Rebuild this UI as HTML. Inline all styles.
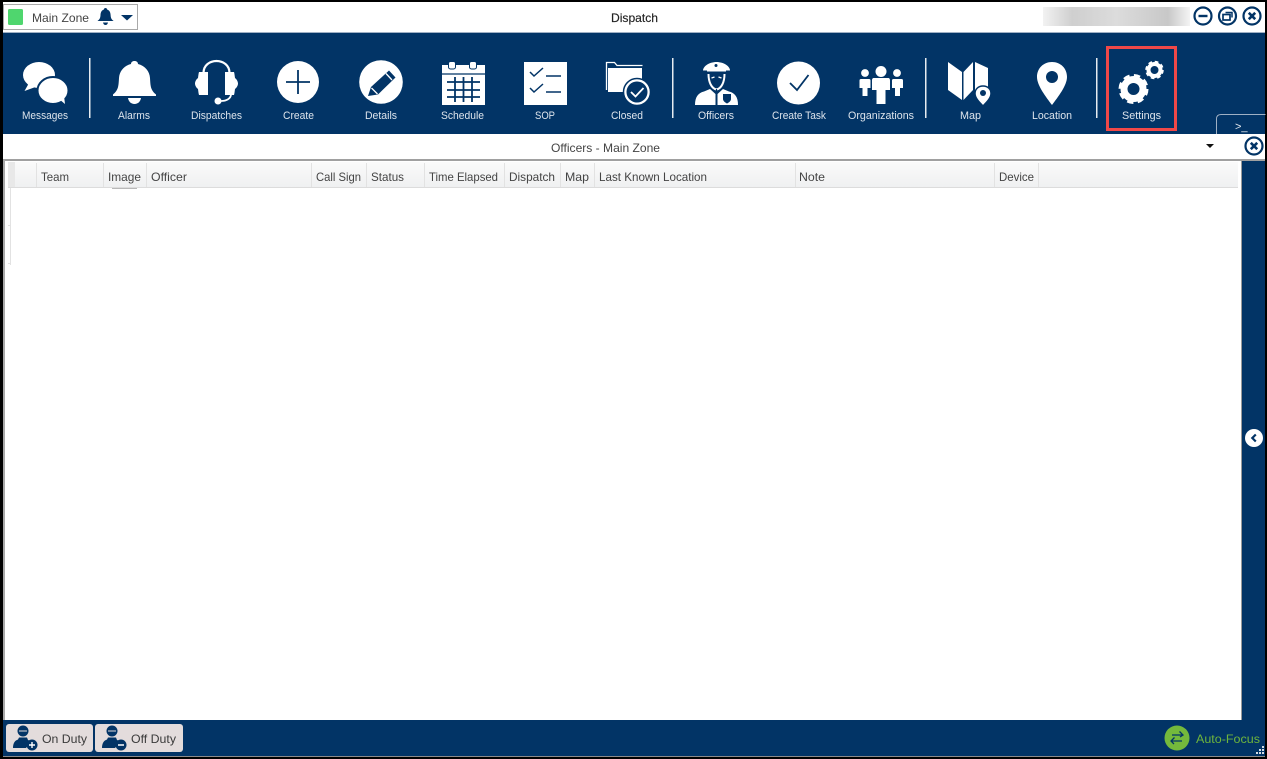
<!DOCTYPE html>
<html lang="en"><head><meta charset="utf-8"><title>Dispatch</title>
<style>
html,body{margin:0;padding:0;background:#000;width:1267px;height:759px;overflow:hidden}
svg{display:block;font-family:"Liberation Sans",sans-serif;filter:blur(.3px)}
.t{fill:#dde4ec;font-size:11px}
.h{fill:#444;font-size:12px}
</style></head><body>
<svg width="1267" height="759" viewBox="0 0 1267 759" xmlns="http://www.w3.org/2000/svg">
<defs>
<linearGradient id="hd" x1="0" y1="0" x2="0" y2="1"><stop offset="0" stop-color="#fafafa"/><stop offset="1" stop-color="#eff0f1"/></linearGradient>
<linearGradient id="bl" x1="0" y1="0" x2="1" y2="0"><stop offset="0" stop-color="#f2f2f2"/><stop offset=".2" stop-color="#cfcfcf"/><stop offset=".5" stop-color="#dcdcdc"/><stop offset=".85" stop-color="#c8c8c8"/><stop offset="1" stop-color="#f4f4f4"/></linearGradient>
</defs>
<rect width="1267" height="759" fill="#000"/>
<rect x="3" y="2" width="1262" height="755" fill="#fff"/>
<!-- title bar -->
<rect x="3.500" y="4.500" width="134" height="25" fill="#fff" stroke="#a9a9a9"/>
<rect x="8" y="9" width="15" height="16" rx="1.500" fill="#4fd66e"/>
<text x="32" y="22" font-size="12" fill="#444" textLength="57" lengthAdjust="spacingAndGlyphs">Main Zone</text>
<path d="M105.500 8c1 0 1.600.7 1.600 1.500 2.500.8 3.400 3 3.500 5.500.1 3 1 4.500 3 6H97.500c2-1.500 2.900-3 3-6 .1-2.500 1-4.700 3.400-5.500 0-.8.600-1.500 1.600-1.500z" fill="#023466"/>
<path d="M103 22.500h5c-.3 1.500-1.200 2.500-2.500 2.500s-2.200-1-2.500-2.500z" fill="#023466"/>
<path d="M121 15h12l-6 5.500z" fill="#023466"/>
<text x="634.500" y="22" font-size="12" fill="#222" text-anchor="middle" textLength="47" lengthAdjust="spacingAndGlyphs" stroke="#222" stroke-width=".15">Dispatch</text>
<rect x="1043" y="7" width="147" height="19" fill="url(#bl)"/>
<g fill="none" stroke="#023466" stroke-width="2.200">
<circle cx="1203" cy="16" r="8.500"/><circle cx="1227.500" cy="16" r="8.500"/><circle cx="1252" cy="16" r="8.500"/>
<path d="M1198.500 16h9" stroke-width="2.400"/>
<rect x="1223" y="14.500" width="7" height="5.500" stroke-width="1.700"/><path d="M1225.500 12.500h6.500v5" stroke-width="1.500"/>
<path d="M1248.800 12.800l6.400 6.400M1255.200 12.800l-6.400 6.400" stroke-width="2.600"/>
</g>
<!-- toolbar -->
<rect x="3" y="32" width="1262" height="1" fill="#9fb0c4"/>
<rect x="3" y="33" width="1262" height="101" fill="#023466"/>
<g fill="#e6ebf0"><rect x="89" y="58" width="1.500" height="60"/><rect x="672" y="58" width="1.500" height="60"/><rect x="925" y="58" width="1.500" height="60"/><rect x="1096" y="58" width="1.500" height="60"/></g>
<g fill="#fff">
<!-- messages -->
<ellipse cx="39" cy="75" rx="16" ry="13"/><path d="M29 83l-4.500 8 11-4z"/>
<ellipse cx="53" cy="90.500" rx="15.500" ry="13.500" stroke="#023466" stroke-width="2"/><path d="M59 99l6 5-1-8z"/>
<!-- alarms -->
<path d="M134.500 61c2.200 0 3.500 1.300 3.500 3 7.500 2 11.500 7.500 12 14 .5 8 .5 12 6 16.500v1.500h-43v-1.500c5.500-4.500 5.500-8.500 6-16.500.5-6.500 4.500-12 12-14 0-1.700 1.300-3 3.500-3z"/>
<path d="M128 98h13c-.5 3.500-3 6-6.500 6s-6-2.500-6.500-6z"/>
<!-- dispatches -->
<path d="M203.500 73c0-16 26-16 26 0" fill="none" stroke="#fff" stroke-width="2.200"/>
<path d="M199 72h9v23h-9c-.5-1.500-.7-4-1-6-1.500-1-3-3.500-3-5.500s1.500-4.500 3-5.500c.3-2 .5-4.500 1-6z"/>
<path d="M234 72h-9v23h9c.5-1.500.7-4 1-6 1.500-1 3-3.500 3-5.500s-1.500-4.500-3-5.500c-.3-2-.5-4.500-1-6z"/>
<path d="M231 94c0 5-5 7-10 7" fill="none" stroke="#fff" stroke-width="1.800"/><circle cx="218" cy="101" r="3.500"/>
<!-- create -->
<circle cx="298" cy="82" r="21"/>
<!-- details -->
<circle cx="381" cy="82" r="21.800"/>
<!-- schedule -->
<rect x="442" y="65" width="43" height="40"/>
<rect x="448.500" y="61.500" width="7" height="7.500" rx="2" stroke="#023466" stroke-width="1"/><rect x="469.500" y="61.500" width="7" height="7.500" rx="2" stroke="#023466" stroke-width="1"/>
<!-- sop -->
<rect x="524" y="62" width="43" height="43"/>
<!-- closed -->
<path d="M608 68h34v24h-34z"/>
<path d="M606.500 90V62.500h8l2.500 3h25.500" fill="none" stroke="#fff" stroke-width="1.300"/>
<circle cx="637" cy="92" r="13.500" stroke="#023466" stroke-width="1.500"/>
<!-- officer -->
<path d="M703 70.500c0-4 6-8.500 13.500-8.500S730 66.500 730 70.500z"/><path d="M707 67h19v4.500h-19z"/>
<path d="M708.500 74c0 8 3 14.500 8 15.500 5-1 8-7.500 8-15.500" fill="none" stroke="#fff" stroke-width="2"/>
<path d="M695 105c0-8 3-12 9-13.500l6-2.500 5.500 5v11z"/><path d="M738 105c0-8-3-12-9-13.500l-6-2.500-5.500 5v11z"/>
<!-- create task -->
<circle cx="798.500" cy="83" r="21.500"/>
<!-- organizations -->
<circle cx="881" cy="71.500" r="5.500"/><path d="M874 78h14c1.500 0 2 1 2 2.500V90h-4.500v14h-9V90H872v-9.500c0-1.500.5-2.500 2-2.500z"/>
<circle cx="865" cy="73" r="3.900"/><path d="M861 79h8c1 0 1.500.5 1.500 1.500V88h-3v8h-5v-8h-3v-7.500c0-1 .5-1.500 1.500-1.500z"/>
<circle cx="897" cy="73" r="3.900"/><path d="M893.500 79h8c1 0 1.500.5 1.500 1.500V88h-3v8h-5v-8h-3v-7.500c0-1 .5-1.500 1.500-1.500z"/>
<!-- map -->
<path d="M948 62l14 10v28l-14-10z"/><path d="M963.500 72l9.500-10v28l-9.500 10z"/><path d="M975 62l13 6v22l-13 0z"/>
<path d="M983 86c5 0 8 3.500 8 7.500 0 4.500-4.500 9-8 12.500-3.500-3.500-8-8-8-12.500 0-4 3-7.500 8-7.500z" stroke="#023466" stroke-width="1.500"/>
<!-- location -->
<path d="M1052 62c8.500 0 15 6.300 15 15 0 8.500-9 20-15 28-6-8-15-19.500-15-28 0-8.700 6.500-15 15-15z"/>
<!-- settings -->
<circle cx="1133.500" cy="89" r="9.500" fill="none" stroke="#fff" stroke-width="7"/>
<circle cx="1133.500" cy="89" r="13" fill="none" stroke="#fff" stroke-width="4" stroke-dasharray="6 4.210"/>
<circle cx="1154.500" cy="70" r="6" fill="none" stroke="#fff" stroke-width="4"/>
<circle cx="1154.500" cy="70" r="8" fill="none" stroke="#fff" stroke-width="2.500" stroke-dasharray="3.600 2.680"/>
</g>
<!-- inner icon strokes -->
<g fill="none" stroke="#023466">
<path d="M298 70v24M286 82h24" stroke-width="1.800"/>
<path d="M368 96l3-9 18-16.500 6.500 7L378 94.500z" fill="#023466" stroke="none"/>
<path d="M371.500 88l6 6M386 73.500l6 6.500" stroke="#fff" stroke-width="1.300"/>
<g stroke-width="1.800"><path d="M447 82h33M447 90h33M447 97h33M455 77v25M463.500 77v25M472 77v25"/></g>
<path d="M442 74h43" stroke-width="1.300"/>
<g stroke-width="1.500"><path d="M530 72l4 4 9-8M546 76h15M530 88l4 4 9-8M546 92h15"/></g>
<circle cx="637" cy="92" r="10.500" fill="#023466" stroke="none"/>
<path d="M631 92l4.500 4.500 8-8.500" stroke="#fff" stroke-width="1.800"/>
<path d="M790 83l7 7 11.500-15" stroke-width="1.800"/>
<path d="M716.500 89v16" stroke-width="1.200"/>
<path d="M723 94h8v5c0 2-2 3.500-4 4.500-2-1-4-2.500-4-4.500z" fill="#023466" stroke="none"/>
</g>
<path d="M711.500 78l3-1M718.500 77l3 1" fill="none" stroke="#fff" stroke-width="1.200"/>
<circle cx="716" cy="65.500" r="1.500" fill="#023466"/>
<circle cx="1052" cy="77" r="6" fill="#023466"/>
<circle cx="983" cy="93" r="3" fill="#023466"/>
<!-- toolbar labels -->
<g class="t" text-anchor="middle" style="font-size:11px">
<text x="45" y="119" textLength="46" lengthAdjust="spacingAndGlyphs">Messages</text>
<text x="134" y="119" textLength="32" lengthAdjust="spacingAndGlyphs">Alarms</text>
<text x="216.500" y="119" textLength="51" lengthAdjust="spacingAndGlyphs">Dispatches</text>
<text x="298.500" y="119" textLength="31" lengthAdjust="spacingAndGlyphs">Create</text>
<text x="381" y="119" textLength="32" lengthAdjust="spacingAndGlyphs">Details</text>
<text x="462.500" y="119" textLength="43" lengthAdjust="spacingAndGlyphs">Schedule</text>
<text x="545" y="119" textLength="20" lengthAdjust="spacingAndGlyphs">SOP</text>
<text x="627" y="119" textLength="32" lengthAdjust="spacingAndGlyphs">Closed</text>
<text x="716" y="119" textLength="36" lengthAdjust="spacingAndGlyphs">Officers</text>
<text x="799" y="119" textLength="54" lengthAdjust="spacingAndGlyphs">Create Task</text>
<text x="881" y="119" textLength="66" lengthAdjust="spacingAndGlyphs">Organizations</text>
<text x="970.500" y="119" textLength="21" lengthAdjust="spacingAndGlyphs">Map</text>
<text x="1052" y="119" textLength="40" lengthAdjust="spacingAndGlyphs">Location</text>
<text x="1141.500" y="119" textLength="39" lengthAdjust="spacingAndGlyphs">Settings</text>
</g>
<rect x="1107.500" y="47.500" width="68" height="82" fill="none" stroke="#f04848" stroke-width="3"/>
<path d="M1216.500 134v-15c0-3 1.500-4.500 4.500-4.500h44.500" fill="none" stroke="#9fb0c4"/>
<text x="1235" y="130" font-size="11" fill="#e6ebf0">&gt;_</text>
<!-- panel header -->
<rect x="3" y="134" width="1262" height="25" fill="#fff"/>
<text x="605.500" y="152" font-size="12" fill="#444" text-anchor="middle" textLength="109" lengthAdjust="spacingAndGlyphs">Officers - Main Zone</text>
<path d="M1206 144h8l-4 4z" fill="#111"/>
<circle cx="1254" cy="146" r="8.500" fill="none" stroke="#023466" stroke-width="2.200"/>
<path d="M1250.800 142.800l6.400 6.400M1257.200 142.800l-6.400 6.400" stroke="#023466" stroke-width="2.600"/>
<rect x="3" y="159" width="1262" height="2" fill="#a0a0a0"/>
<rect x="3" y="160" width="2" height="560" fill="#a8a8a8"/>
<!-- table header -->
<rect x="8" y="162" width="1230" height="25" fill="url(#hd)"/>
<rect x="8" y="187" width="1230" height="1" fill="#dcdcdc"/>
<rect x="8" y="162" width="7" height="25" fill="#e8e8e8"/>
<g fill="#e2e2e2"><rect x="36" y="163" width="1" height="24"/><rect x="103" y="163" width="1" height="24"/><rect x="146" y="163" width="1" height="24"/><rect x="311" y="163" width="1" height="24"/><rect x="366" y="163" width="1" height="24"/><rect x="424" y="163" width="1" height="24"/><rect x="504" y="163" width="1" height="24"/><rect x="560" y="163" width="1" height="24"/><rect x="594" y="163" width="1" height="24"/><rect x="795" y="163" width="1" height="24"/><rect x="994" y="163" width="1" height="24"/><rect x="1038" y="163" width="1" height="24"/>
<rect x="10" y="188" width="1" height="77"/><rect x="8" y="225" width="3" height="1"/><rect x="8" y="263" width="3" height="1"/></g>
<rect x="112" y="188" width="25" height="1" fill="#b8b8b8"/>
<g class="h">
<text x="41" y="181" textLength="28" lengthAdjust="spacingAndGlyphs">Team</text>
<text x="108" y="181" textLength="33" lengthAdjust="spacingAndGlyphs">Image</text>
<text x="151" y="181" textLength="36" lengthAdjust="spacingAndGlyphs">Officer</text>
<text x="316" y="181" textLength="45" lengthAdjust="spacingAndGlyphs">Call Sign</text>
<text x="371" y="181" textLength="33" lengthAdjust="spacingAndGlyphs">Status</text>
<text x="429" y="181" textLength="69" lengthAdjust="spacingAndGlyphs">Time Elapsed</text>
<text x="509" y="181" textLength="46" lengthAdjust="spacingAndGlyphs">Dispatch</text>
<text x="565" y="181" textLength="24" lengthAdjust="spacingAndGlyphs">Map</text>
<text x="599" y="181" textLength="108" lengthAdjust="spacingAndGlyphs">Last Known Location</text>
<text x="799" y="181" textLength="26" lengthAdjust="spacingAndGlyphs">Note</text>
<text x="999" y="181" textLength="35" lengthAdjust="spacingAndGlyphs">Device</text>
</g>
<!-- right strip -->
<rect x="1241" y="160" width="1" height="560" fill="#9a9a9a"/>
<rect x="1242" y="161" width="23" height="559" fill="#023466"/>
<circle cx="1254" cy="438" r="9" fill="#fff"/>
<path d="M1255.800 434.500l-3.500 3.500 3.500 3.500" fill="none" stroke="#023466" stroke-width="2.200"/>
<!-- bottom bar -->
<rect x="3" y="720" width="1262" height="36" fill="#023466"/>
<rect x="3" y="756" width="1262" height="1" fill="#8a8a8a"/>
<rect x="6" y="724" width="87" height="28" rx="3" fill="#e3dcdc"/>
<rect x="95" y="724" width="88" height="28" rx="3" fill="#e3dcdc"/>
<g fill="#023466">
<circle cx="23" cy="731" r="5.500"/><path d="M13 748c0-5 2-7.500 5-8.500l1-2h8l1 2.500c1.500.5 2 1 3 2l-5 6z"/>
<circle cx="32" cy="745" r="5.500"/>
<circle cx="112" cy="731" r="5.500"/><path d="M102 748c0-5 2-7.500 5-8.500l1-2h8l1 2.500c1.500.5 2 1 3 2l-5 6z"/>
<circle cx="121" cy="745" r="5.500"/>
</g>
<path d="M19 731h8M108 731h8" stroke="#e3dcdc" stroke-width="1"/>
<path d="M29 745h6M32 742v6M118 745h6" stroke="#fff" stroke-width="1.400"/>
<text x="42" y="743" font-size="12" fill="#3a3a3a" textLength="45" lengthAdjust="spacingAndGlyphs">On Duty</text>
<text x="131" y="743" font-size="12" fill="#3a3a3a" textLength="45" lengthAdjust="spacingAndGlyphs">Off Duty</text>
<circle cx="1177" cy="738" r="12.500" fill="#74b93c"/>
<path d="M1172 735h10.500M1179.500 731.500l3.500 3.500-3 2M1182 741h-10.500M1174.500 737.500l-3.500 3.500 3 3" fill="none" stroke="#023466" stroke-width="1.300"/>
<text x="1196" y="743" font-size="12" fill="#6fb53c" textLength="64" lengthAdjust="spacingAndGlyphs">Auto-Focus</text>
<g fill="#d5dce4"><rect x="1262" y="746" width="2" height="2"/><rect x="1259" y="749" width="2" height="2"/><rect x="1262" y="749" width="2" height="2"/><rect x="1256" y="752" width="2" height="2"/><rect x="1259" y="752" width="2" height="2"/><rect x="1262" y="752" width="2" height="2"/></g>
</svg>
</body></html>
